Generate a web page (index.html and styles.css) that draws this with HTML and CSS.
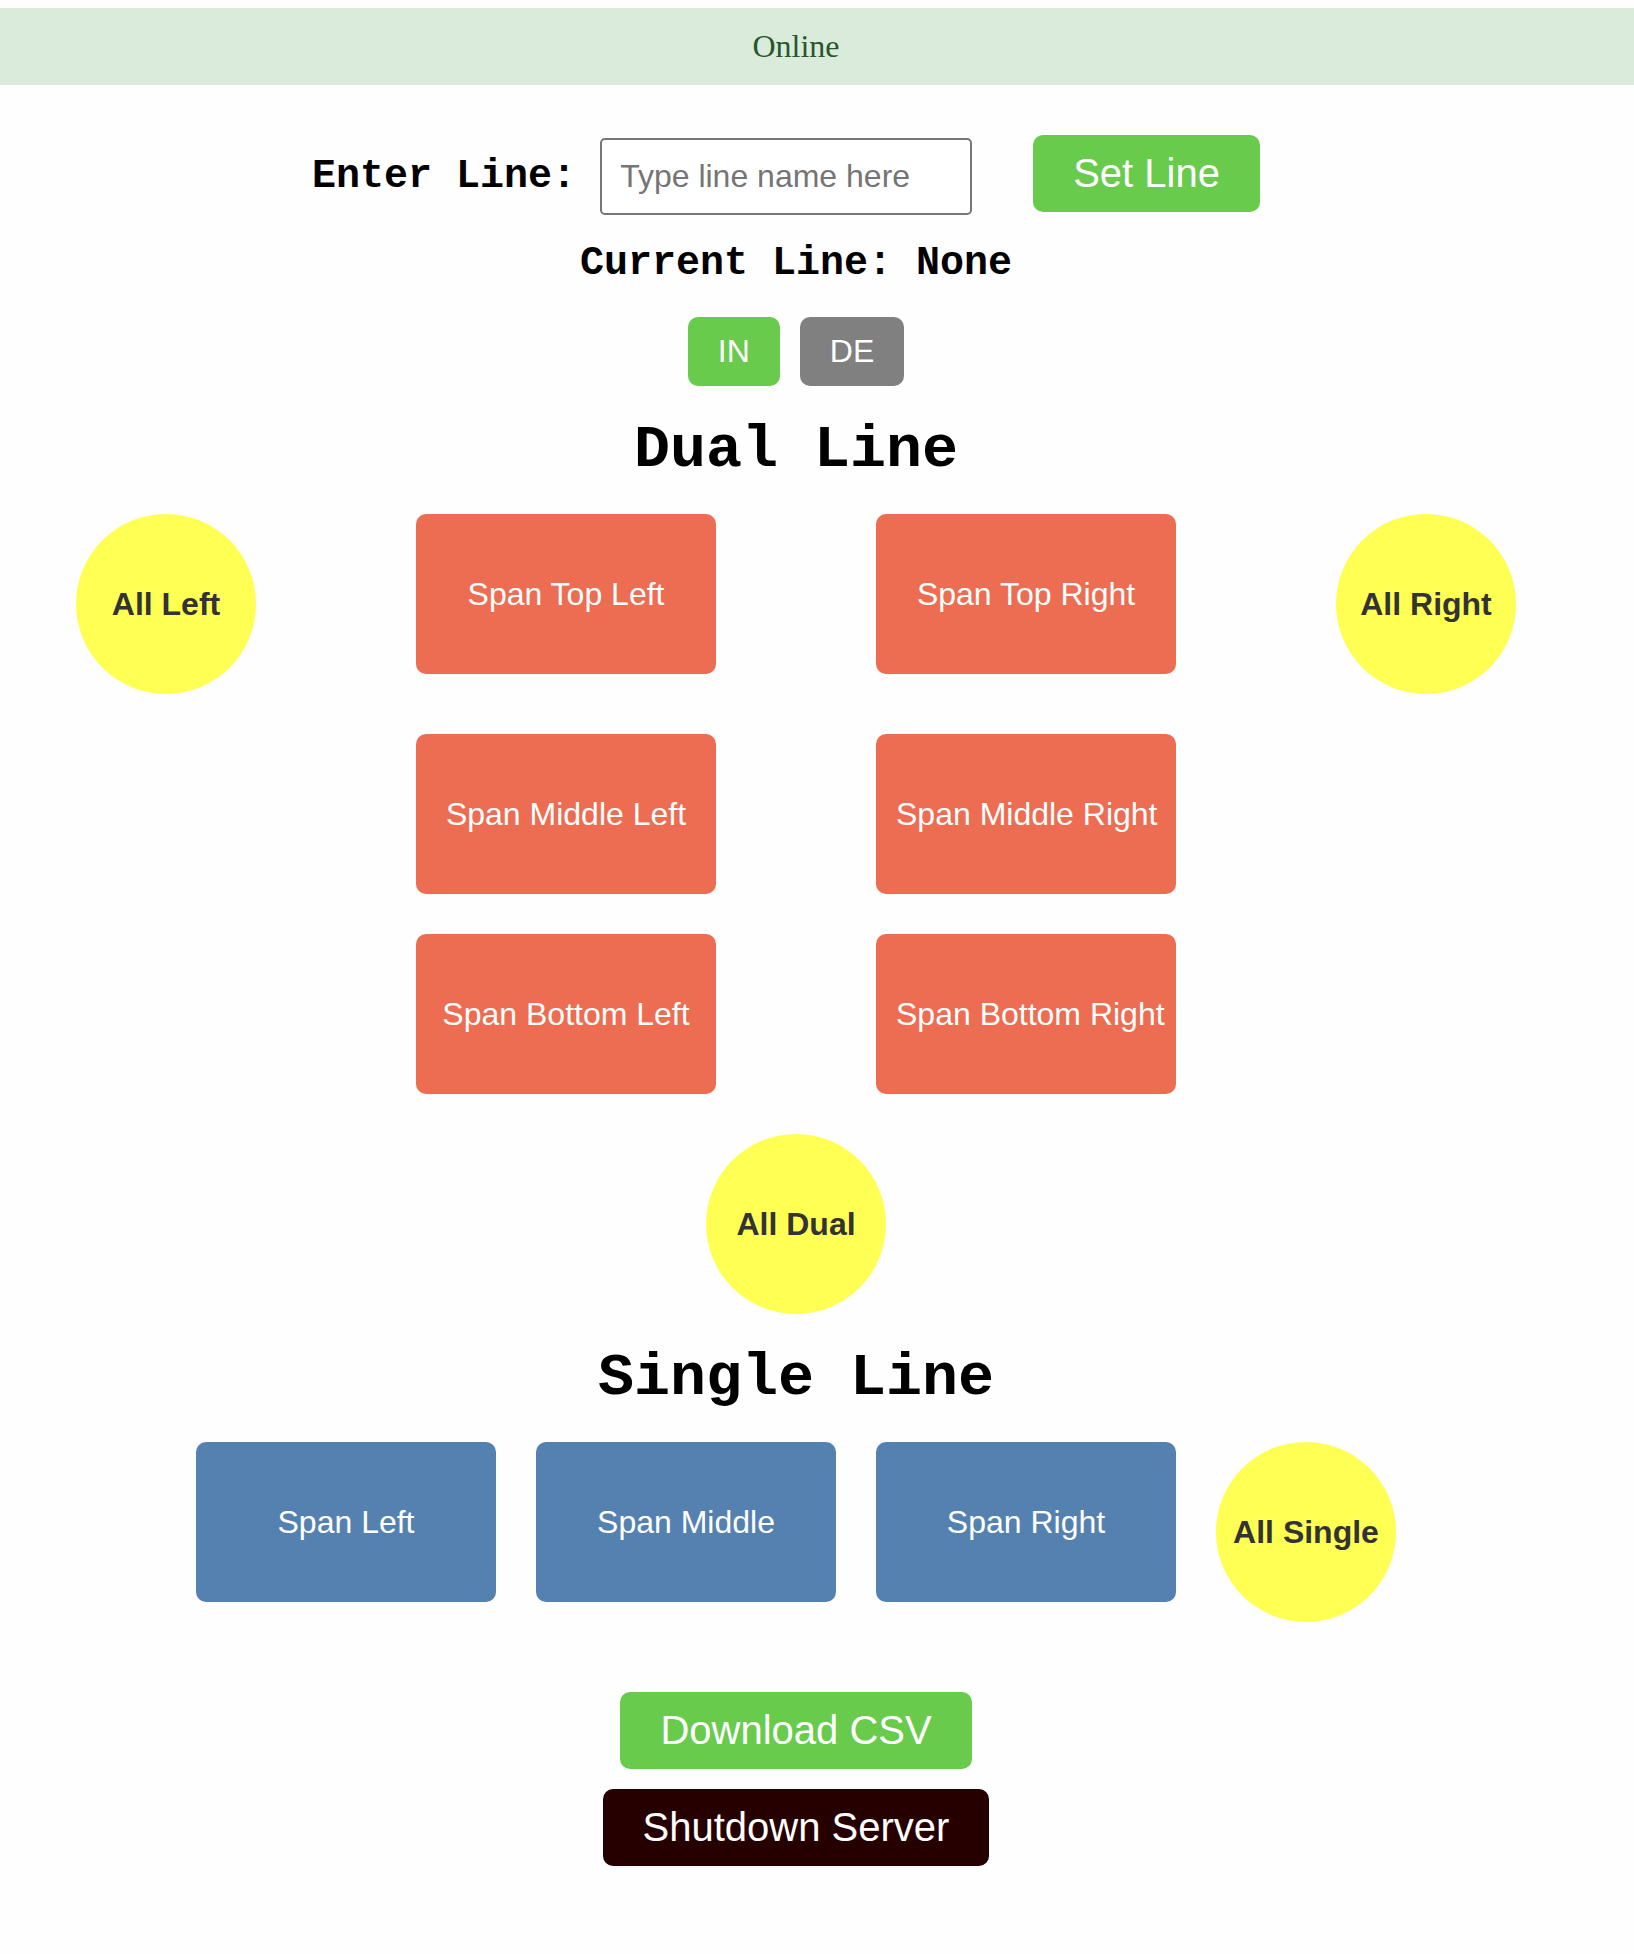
FILE: index.html
```html
<!DOCTYPE html>
<html lang="en">
<head>
  <meta charset="utf-8">
  <title>Line Control</title>
  <link rel="stylesheet" href="styles.css">
</head>
<body>
  <div class="status" role="status">Online</div>

  <main class="page">
    <form class="line-form">
      <label class="line-label" for="line-name">Enter Line:</label>
      <input class="line-input" id="line-name" type="text" placeholder="Type line name here">
      <button class="action" type="button">Set Line</button>
    </form>

    <h2 class="current-line">Current Line: None</h2>

    <div class="modes">
      <button class="mode mode-active" type="button">IN</button>
      <button class="mode" type="button">DE</button>
    </div>

    <h1 class="section-title">Dual Line</h1>
    <div class="dual-grid">
      <button class="all" type="button">All Left</button>
      <button class="span dual" type="button">Span Top Left</button>
      <button class="span dual" type="button">Span Top Right</button>
      <button class="all" type="button">All Right</button>
      <button class="span dual column-left" type="button">Span Middle Left</button>
      <button class="span dual column-right" type="button">Span Middle Right</button>
      <button class="span dual column-left" type="button">Span Bottom Left</button>
      <button class="span dual column-right" type="button">Span Bottom Right</button>
      <button class="all all-dual" type="button">All Dual</button>
    </div>

    <h1 class="section-title">Single Line</h1>
    <div class="single-row">
      <button class="span single" type="button">Span Left</button>
      <button class="span single" type="button">Span Middle</button>
      <button class="span single" type="button">Span Right</button>
      <button class="all" type="button">All Single</button>
    </div>

    <div class="server-actions">
      <button class="action" type="button">Download CSV</button>
      <button class="action shutdown" type="button">Shutdown Server</button>
    </div>
  </main>
</body>
</html>
```

FILE: styles.css
```css
* {
  box-sizing: border-box;
}

body {
  margin: 0;
  padding-top: 8px;
  background: #fefefe;
  color: #000;
  font-family: "Liberation Serif", "Times New Roman", serif;
}

button,
input {
  margin: 0;
  font-family: "Liberation Sans", Arial, sans-serif;
  font-size: 32px;
}

button {
  border: 0;
  border-radius: 10px;
  color: #fff;
  white-space: nowrap;
  cursor: pointer;
}

.status {
  padding: 20px 42px 20px 0;
  background: #daebdc;
  color: #28572b;
  font-size: 32px;
  line-height: 37px;
  text-align: center;
}

.page {
  display: flex;
  flex-direction: column;
  align-items: center;
  gap: 30px;
  padding: 50px 42px 88px 0;
}

.line-form {
  display: flex;
  align-items: baseline;
  padding-right: 20px;
}

.line-label,
.current-line,
.section-title {
  margin: 0;
  font-family: "Liberation Mono", "Courier New", monospace;
  font-weight: bold;
}

.line-label,
.current-line {
  font-size: 40px;
  line-height: 46px;
}

.current-line {
  margin-top: -4px;
}

.section-title {
  font-size: 60px;
  line-height: 68px;
}

.line-input {
  width: 372px;
  height: 77px;
  margin: 0 61px 0 24px;
  padding: 18px;
  border: 2px solid #767676;
  border-radius: 5px;
  background: #fff;
}

.line-input::placeholder {
  color: #757575;
}

.action {
  padding: 16px 40px;
  background: #68cb4c;
  font-size: 40px;
  line-height: 45px;
}

.shutdown {
  background: #260000;
}

.modes {
  display: flex;
  gap: 20px;
}

.mode {
  padding: 16px 30px;
  background: #808080;
  line-height: 37px;
}

.mode-active {
  background: #68cb4c;
}

.dual-grid {
  display: grid;
  grid-template-columns: 180px 300px 300px 180px;
  gap: 40px 160px;
  align-items: start;
}

.column-left {
  grid-column: 2;
}

.column-right {
  grid-column: 3;
}

.span {
  width: 300px;
  height: 160px;
  padding: 20px;
}

.dual {
  background: #ec6d52;
}

.single {
  background: #5581b1;
}

.all {
  width: 180px;
  height: 180px;
  padding: 0;
  border-radius: 50%;
  background: #ffff54;
  color: #333;
  font-weight: bold;
}

.all-dual {
  grid-column: 1 / -1;
  justify-self: center;
}

.single-row {
  display: flex;
  align-items: flex-start;
  gap: 40px;
}

.server-actions {
  display: flex;
  flex-direction: column;
  align-items: center;
  gap: 20px;
  margin-top: 40px;
}
```
